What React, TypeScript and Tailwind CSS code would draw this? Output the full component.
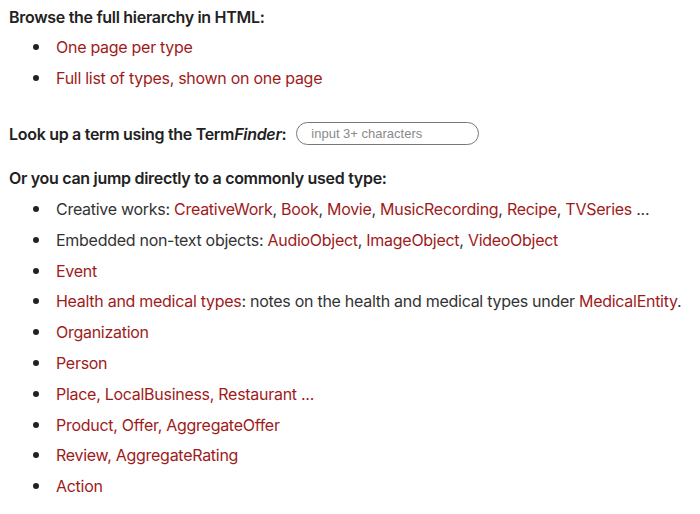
import React from "react";

const red = "text-[#9e1b1b]";

type Part = { t: string; link?: boolean };

const common: Part[][] = [
  [
    { t: "Creative works: " },
    { t: "CreativeWork", link: true },
    { t: ", " },
    { t: "Book", link: true },
    { t: ", " },
    { t: "Movie", link: true },
    { t: ", " },
    { t: "MusicRecording", link: true },
    { t: ", " },
    { t: "Recipe", link: true },
    { t: ", " },
    { t: "TVSeries", link: true },
    { t: " ..." },
  ],
  [
    { t: "Embedded non-text objects: " },
    { t: "AudioObject", link: true },
    { t: ", " },
    { t: "ImageObject", link: true },
    { t: ", " },
    { t: "VideoObject", link: true },
  ],
  [{ t: "Event", link: true }],
  [
    { t: "Health and medical types", link: true },
    { t: ": notes on the health and medical types under " },
    { t: "MedicalEntity", link: true },
    { t: "." },
  ],
  [{ t: "Organization", link: true }],
  [{ t: "Person", link: true }],
  [{ t: "Place, LocalBusiness, Restaurant ...", link: true }],
  [{ t: "Product, Offer, AggregateOffer", link: true }],
  [{ t: "Review, AggregateRating", link: true }],
  [{ t: "Action", link: true }],
];

function Item({ parts }: { parts: Part[] }) {
  return (
    <li className="flex items-center h-[30.8px] pl-[24px] whitespace-nowrap tracking-[-0.28px]">
      <span className="w-[6px] h-[6px] rounded-full bg-[#222] shrink-0" />
      <span className="ml-[17px] text-[#333]">
        {parts.map((p, i) =>
          p.link ? (
            <a key={i} className={red}>
              {p.t}
            </a>
          ) : (
            <span key={i}>{p.t}</span>
          )
        )}
      </span>
    </li>
  );
}

export default function App() {
  return (
    <div
      className="w-[700px] h-[514px] overflow-hidden bg-white text-[16px] text-[#222] pl-[9px] pt-[5px]"
      style={{ fontFamily: "Inter, 'Noto Sans', sans-serif" }}
    >
      <h2 className="font-semibold leading-[24px] tracking-[-0.3px]">
        Browse the full hierarchy in HTML:
      </h2>
      <ul className="mt-[3px]">
        <Item parts={[{ t: "One page per type", link: true }]} />
        <Item parts={[{ t: "Full list of types, shown on one page", link: true }]} />
      </ul>

      <div className="mt-[28px] flex items-center h-[24px]">
        <span className="font-semibold tracking-[-0.3px]">
          Look up a term using the Term<i>Finder</i>:
        </span>
        <input
          placeholder="input 3+ characters"
          className="ml-[10px] w-[183px] h-[23px] rounded-full border border-[#777] pl-[14px] text-[13px] placeholder:text-[#8a8a8a] outline-none"
          style={{ fontFamily: "'Liberation Sans', Arial, sans-serif" }}
        />
      </div>

      <h2 className="mt-[20px] font-semibold leading-[24px] tracking-[-0.3px]">
        Or you can jump directly to a commonly used type:
      </h2>
      <ul className="mt-[4px]">
        {common.map((p, i) => (
          <Item key={i} parts={p} />
        ))}
      </ul>
    </div>
  );
}
